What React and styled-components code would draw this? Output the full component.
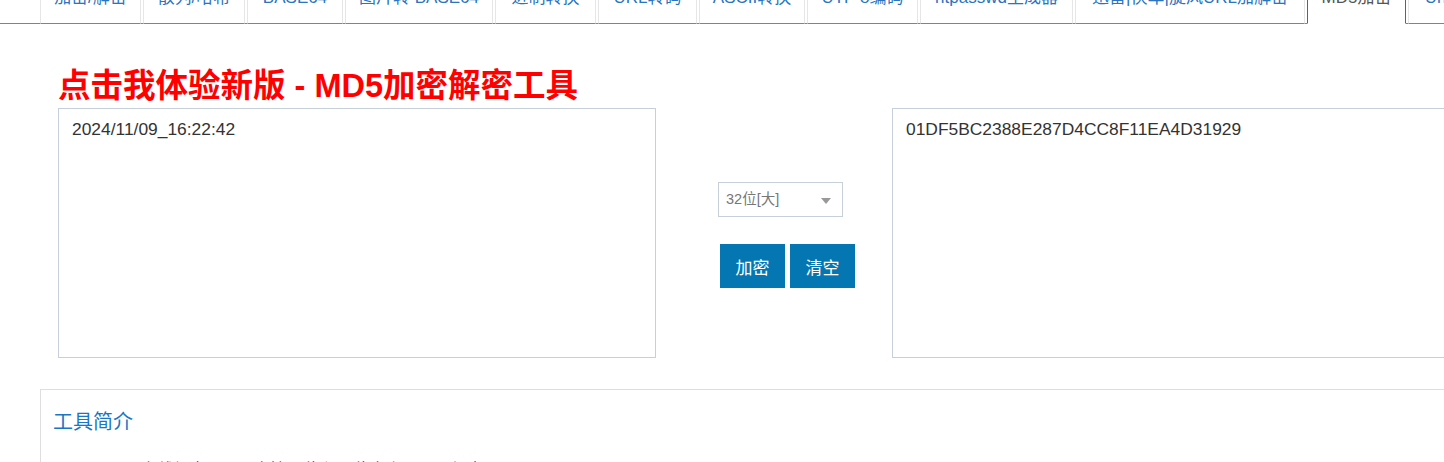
import React from "react";
import styled, { createGlobalStyle } from "styled-components";

const Global = createGlobalStyle`
  html, body { margin: 0; padding: 0; background: #fff; overflow: hidden; }
  body { font-family: "Liberation Sans", Arial, "Noto Sans CJK SC", sans-serif; color: #333; }
  * { box-sizing: border-box; }
`;

const Page = styled.div`
  width: 1700px;
  margin-top: -23px;
`;

const TabBar = styled.ul`
  list-style: none;
  margin: 0;
  padding: 0 0 0 40px;
  display: flex;
  border-bottom: 1px solid #4a8fd8;
`;

const TabItem = styled.li`
  flex: 0 0 auto;
  width: ${(p) => p.$w}px;
  margin: 0 2px -1px 0;
`;

const TabLink = styled.a`
  display: block;
  padding: 10px 0 15px;
  text-align: center;
  white-space: nowrap;
  font-size: 17px;
  line-height: 20px;
  text-decoration: none;
  color: ${(p) => (p.$active ? "#555" : "#2a74c0")};
  background: #fff;
  border: 1px solid ${(p) => (p.$active ? "#2e6eb0" : "#e6e6e6")};
  border-bottom-color: ${(p) => (p.$active ? "transparent" : "#4a8fd8")};
`;

const Title = styled.h1`
  margin: 42px 0 2px 58px;
  font-size: 32.5px;
  line-height: 40px;
  font-weight: bold;
  color: #ff0000;
  letter-spacing: 0;
`;

const ToolRow = styled.div`
  display: flex;
  align-items: flex-start;
  padding-left: 58px;
`;

const TextBox = styled.textarea`
  width: 598px;
  height: 250px;
  padding: 8px 13px;
  border: 1px solid #c7cfdb;
  border-radius: 0;
  font-family: "Liberation Sans", Arial, sans-serif;
  font-size: 17.4px;
  line-height: 25px;
  color: #333;
  resize: none;
  overflow: hidden;
  outline: none;
  background: #fff;
`;

const Middle = styled.div`
  width: 236px;
  display: flex;
  flex-direction: column;
  align-items: flex-start;
  padding-top: 74px;
  padding-left: 62px;
`;

const SelectBox = styled.div`
  position: relative;
  width: 125px;
  height: 35px;
  border: 1px solid #c7cfdb;
  background: #fff;
  padding-left: 7px;
  font-size: 14.5px;
  line-height: 33px;
  color: #777;
`;

const Caret = styled.span`
  position: absolute;
  right: 11px;
  top: 15px;
  width: 0;
  height: 0;
  border-left: 5px solid transparent;
  border-right: 5px solid transparent;
  border-top: 6px solid #999;
`;

const ButtonRow = styled.div`
  display: flex;
  gap: 5px;
  margin-top: 27px;
  margin-left: 2px;
`;

const Button = styled.button`
  width: 65px;
  height: 44px;
  border: none;
  border-radius: 0;
  background: #0477b3;
  color: #fff;
  font-family: "Liberation Sans", Arial, "Noto Sans CJK SC", sans-serif;
  font-size: 17px;
  padding: 0;
  cursor: pointer;
`;

const Intro = styled.section`
  margin: 31px 0 0 40px;
  border: 1px solid #dedede;
  padding: 18px 12px 0;
  height: 200px;
`;

const IntroHead = styled.h3`
  margin: 0;
  font-size: 20px;
  line-height: 28px;
  font-weight: normal;
  color: #1a76c4;
`;

const IntroText = styled.p`
  margin: 21px 0 0;
  text-indent: 55px;
  font-size: 16px;
  line-height: 26px;
  color: #444;
`;

const tabs = [
  { label: "加密/解密", w: 101 },
  { label: "散列/哈希", w: 102 },
  { label: "BASE64", w: 96 },
  { label: "图片转 BASE64", w: 148 },
  { label: "进制转换", w: 101 },
  { label: "URL转码", w: 99 },
  { label: "ASCII转换", w: 106 },
  { label: "UTF-8编码", w: 111 },
  { label: "htpasswd生成器", w: 153 },
  { label: "迅雷|快车|旋风URL加解密", w: 230 },
  { label: "MD5加密", w: 99, active: true },
  { label: "Unicode编码", w: 130 },
  { label: "JS加密/解密", w: 130 },
];

export default function App() {
  return (
    <>
      <Global />
      <Page>
        <TabBar>
          {tabs.map((t) => (
            <TabItem key={t.label} $w={t.w}>
              <TabLink href="#" $active={t.active}>
                {t.label}
              </TabLink>
            </TabItem>
          ))}
        </TabBar>
        <Title>点击我体验新版 - MD5加密解密工具</Title>
        <ToolRow>
          <TextBox readOnly defaultValue="2024/11/09_16:22:42" />
          <Middle>
            <SelectBox>
              32位[大]
              <Caret />
            </SelectBox>
            <ButtonRow>
              <Button>加密</Button>
              <Button>清空</Button>
            </ButtonRow>
          </Middle>
          <TextBox readOnly defaultValue="01DF5BC2388E287D4CC8F11EA4D31929" />
        </ToolRow>
        <Intro>
          <IntroHead>工具简介</IntroHead>
          <IntroText>MD5在线加密工具，支持32位和16位大小写MD5加密。</IntroText>
        </Intro>
      </Page>
    </>
  );
}
